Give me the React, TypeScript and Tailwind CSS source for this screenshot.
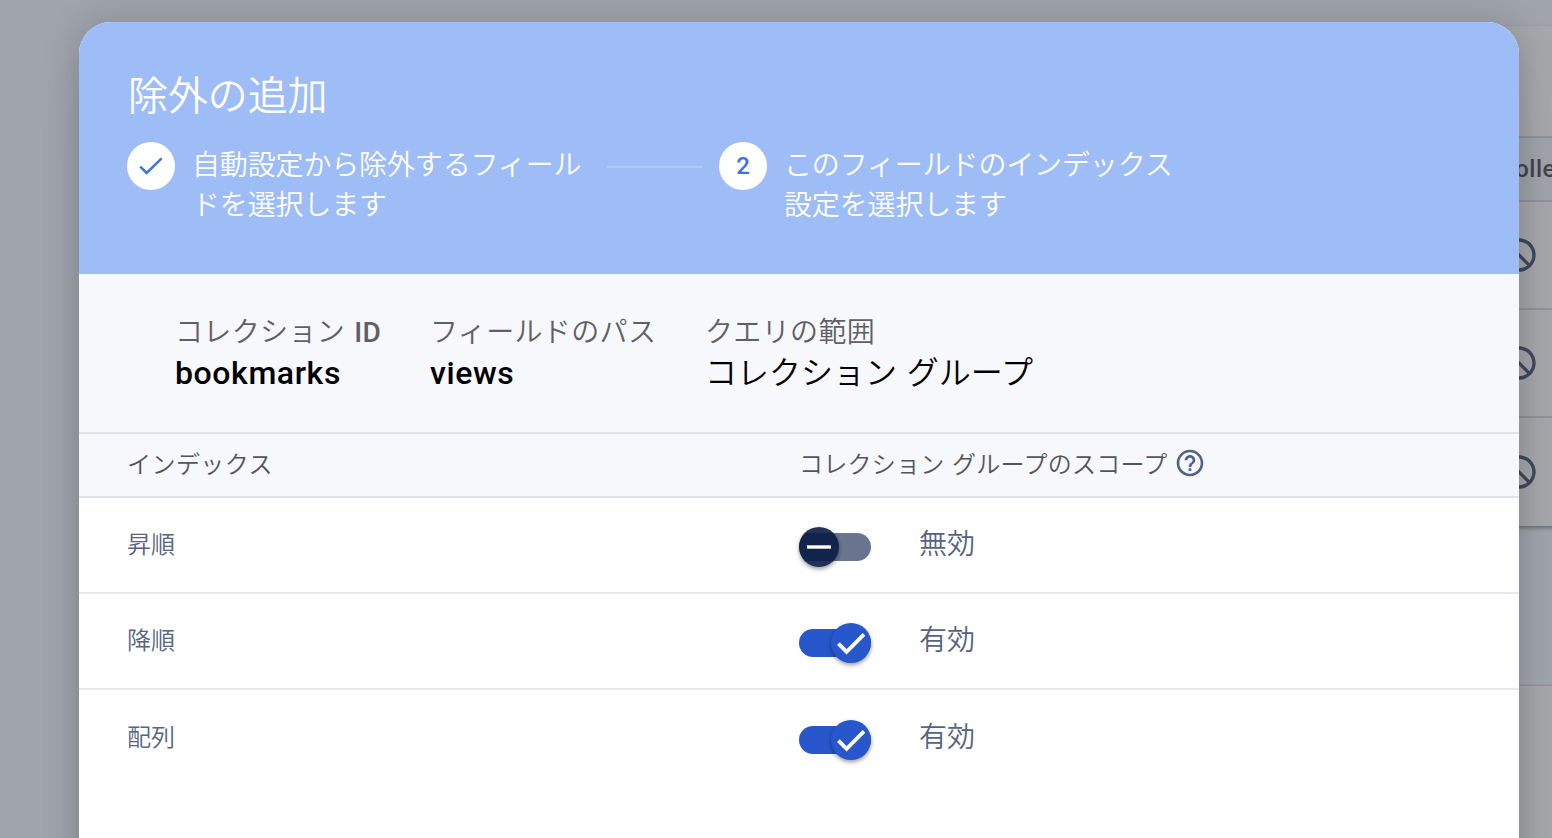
import React from "react";

const jp = "font-['Roboto','Noto_Sans_CJK_JP',sans-serif]";

function BlockIcon() {
  return (
    <svg viewBox="0 0 24 24" className="size-10 shrink-0 fill-[#3f4961]">
      <path d="M12 2C6.48 2 2 6.48 2 12s4.48 10 10 10 10-4.48 10-10S17.52 2 12 2zM4 12c0-4.42 3.58-8 8-8 1.85 0 3.55.63 4.9 1.69L5.69 16.9C4.63 15.55 4 13.85 4 12zm8 8c-1.85 0-3.55-.63-4.9-1.69L18.31 7.1C19.37 8.45 20 10.15 20 12c0 4.42-3.58 8-8 8z" transform="matrix(-1 0 0 1 24 0)" />
    </svg>
  );
}

function Backdrop() {
  return (
    <div className="col-start-1 row-start-1 h-[838px] overflow-hidden bg-[#a0a4ad] pt-[26px] pl-40">
      <div className="h-[500px] w-[1500px] bg-[#a6a7aa] shadow-[0_2px_4px_rgba(0,0,0,0.35)]">
        <div className="h-[110px]" />
        <div className="flex h-[66px] items-center border-y-2 border-[#90939c] bg-[#a0a3ab] pl-[1339px] text-2xl font-medium tracking-[0.5px] text-[#434549]">
          Collection
        </div>
        {[0, 1, 2].map((i) => (
          <div
            key={i}
            className="flex h-[108px] items-center border-b-2 border-[#929399] pl-[1339px] last:border-b-0"
          >
            <BlockIcon />
          </div>
        ))}
      </div>
      <div className="mt-40 h-80 w-[1500px] bg-[#a6a7aa] shadow-[0_0_3px_rgba(0,0,0,0.2)]" />
    </div>
  );
}

function Step({ mark, children }: { mark: React.ReactNode; children: React.ReactNode }) {
  return (
    <div className="flex items-start">
      <div className="flex size-12 shrink-0 items-center justify-center rounded-full bg-white text-2xl font-medium text-[#3b72e4]">
        {mark}
      </div>
      <div className="mt-1 ml-[17px] w-[400px] text-[28px] leading-10 font-[350] tracking-[-0.15px] whitespace-nowrap text-white">
        {children}
      </div>
    </div>
  );
}

function Header() {
  return (
    <header className="h-[252px] bg-[#9ebcf6] px-12 pt-[49px]">
      <h1 className="pl-px text-[40px] leading-[52px] font-[350] tracking-[-0.1px] text-white">除外の追加</h1>
      <div className="mt-[19px] flex items-start">
        <Step
          mark={
            <svg viewBox="0 0 24 18" className="h-[18px] w-6">
              <path d="M1.2 9.6 7.7 16 22.6 1.4" fill="none" stroke="#3b72e4" strokeWidth="2.5" />
            </svg>
          }
        >
          自動設定から除外するフィール
          <br />
          ドを選択します
        </Step>
        <div className="mt-6 mr-4 ml-[15px] h-0.5 w-24 bg-[#b0c8f8]" />
        <Step mark="2">
          このフィールドのインデックス
          <br />
          設定を選択します
        </Step>
      </div>
    </header>
  );
}

function Field({ label, value, className, valueClass }: { label: React.ReactNode; value: string; className: string; valueClass: string }) {
  return (
    <div className={className}>
      <div className="text-[28px] leading-10 font-[350] tracking-[0.35px] text-[#5f6063] [word-spacing:2px]">{label}</div>
      <div className={`-mt-px text-[32px] leading-[42px] text-black ${valueClass}`}>{value}</div>
    </div>
  );
}

function Toggle({ on }: { on: boolean }) {
  return (
    <div className="flex h-10 w-[72px] items-center">
      <div className={`flex h-7 w-[72px] items-center rounded-full ${on ? "justify-end bg-[#2757cb]" : "bg-[#69748f]"}`}>
        <div
          className={`flex size-10 shrink-0 items-center justify-center rounded-full shadow-[0_2px_4px_rgba(0,0,0,0.4)] ${on ? "bg-[#2757cb]" : "bg-[linear-gradient(#22325a_0_6px,#12234c_6px_34px,#22325a_34px)]"}`}
        >
          <svg viewBox="0 0 40 40" className="size-10" fill="none" stroke="white">
            {on ? <path d="M7.4 20.6 15.6 28.8 33 11.4" strokeWidth="3.8" /> : <path d="M8 20h24" strokeWidth="3.4" />}
          </svg>
        </div>
      </div>
    </div>
  );
}

const rows = [
  { name: "昇順", on: false },
  { name: "降順", on: true },
  { name: "配列", on: true },
];

function Dialog() {
  return (
    <section className="z-10 col-start-1 row-start-1 mt-[22px] ml-[79px] h-[900px] w-[1440px] overflow-hidden rounded-[32px] bg-white shadow-[0_22px_30px_-14px_rgba(0,0,0,0.15),0_48px_76px_6px_rgba(0,0,0,0.02),0_0_36px_2px_rgba(0,0,0,0.16)]">
      <Header />
      <div className="flex h-40 border-b-2 border-[#dfe3e9] bg-[#f7f8fc] pt-[39px] pl-24">
        <Field
          className="w-[255px]"
          label={<>コレクション <span className="font-medium">ID</span></>}
          value="bookmarks"
          valueClass="font-medium tracking-[0.6px]"
        />
        <Field className="w-[275px]" label="フィールドのパス" value="views" valueClass="font-medium tracking-[0.6px]" />
        <Field className="" label="クエリの範囲" value="コレクション グループ" valueClass="font-[350] [word-spacing:2px]" />
      </div>
      <div className="flex h-16 items-center border-b-2 border-[#dfe3e9] bg-[#f7f8fc] pb-px pl-12 text-2xl font-[350] text-[#545558]">
        <div className="w-[672px] tracking-[0.45px]">インデックス</div>
        <div className="tracking-[0.25px] [word-spacing:1.5px]">コレクション グループのスコープ</div>
        <svg viewBox="0 0 24 24" className="mb-1 ml-[7px] size-8 fill-[#50628a]">
          <path d="M11 18h2v-2h-2v2zm1-16C6.48 2 2 6.48 2 12s4.48 10 10 10 10-4.48 10-10S17.52 2 12 2zm0 18c-4.41 0-8-3.59-8-8s3.59-8 8-8 8 3.59 8 8-3.59 8-8 8zm0-14c-2.21 0-4 1.79-4 4h2c0-1.1.9-2 2-2s2 .9 2 2c0 2-3 1.75-3 5h2c0-2.25 3-2.5 3-5 0-2.21-1.79-4-4-4z" />
        </svg>
      </div>
      {rows.map((row) => (
        <div
          key={row.name}
          className="flex h-24 items-center border-b-2 border-[#e7e8ee] pt-[3px] pl-12 text-[#566480] last:border-b-0"
        >
          <div className="w-[672px] pb-1 text-2xl font-[350]">{row.name}</div>
          <Toggle on={row.on} />
          <div className="pb-1 pl-12 text-[28px] font-[350]">{row.on ? "有効" : "無効"}</div>
        </div>
      ))}
    </section>
  );
}

export default function App() {
  return (
    <main lang="ja" className={`grid h-[838px] w-[1552px] grid-cols-1 grid-rows-1 overflow-hidden ${jp}`}>
      <Backdrop />
      <Dialog />
    </main>
  );
}
